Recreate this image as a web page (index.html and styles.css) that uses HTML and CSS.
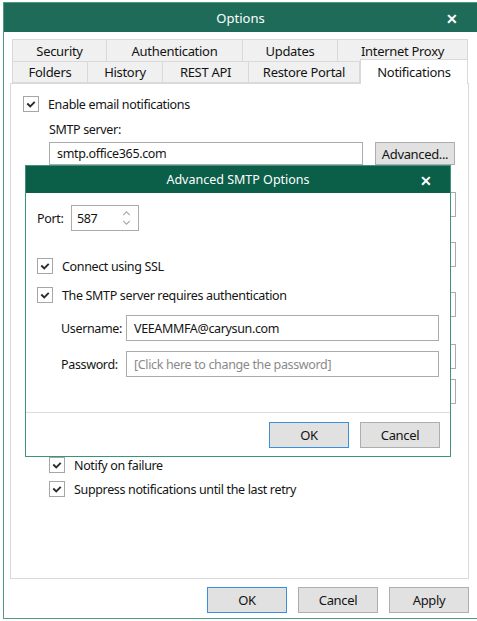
FILE: index.html
```html
<!DOCTYPE html>
<html>
	<head>
		<meta charset="UTF-8">
		<title>Options</title>
		<link rel="stylesheet" href="styles.css">
	</head>
	<body>
		<div class="window">
			<div class="titlebar">
				<span class="title">Options</span>
				<span class="close">&#x2715;</span>
			</div>
			<div class="tabs">
				<div class="tabrow">
					<div class="tab w95">Security</div>
					<div class="tab w136">Authentication</div>
					<div class="tab w95">Updates</div>
					<div class="tab w130">Internet Proxy</div>
				</div>
				<div class="tabrow">
					<div class="tab w76">Folders</div>
					<div class="tab w75">History</div>
					<div class="tab w86">REST API</div>
					<div class="tab w111">Restore Portal</div>
					<div class="tab w108 active">Notifications</div>
				</div>
			</div>
			<div class="panel">
				<label class="opt first"><span class="chk"><svg viewBox="0 0 15 15"><polyline points="3.5,7 6.7,10.2 11.5,5.2"/></svg></span>Enable email notifications</label>
				<div class="lbl">SMTP server:</div>
				<div class="srvrow">
					<div class="field srv">smtp.office365.com</div>
					<div class="btn adv">Advanced...</div>
				</div>
				<div class="under">
					<div class="field u1"></div>
					<div class="field u2"></div>
					<div class="field u3"></div>
					<div class="field u4"></div>
					<div class="field u5"></div>
				</div>
				<label class="opt sub"><span class="chk"><svg viewBox="0 0 15 15"><polyline points="3.5,7 6.7,10.2 11.5,5.2"/></svg></span>Notify on failure</label>
				<label class="opt sub next"><span class="chk"><svg viewBox="0 0 15 15"><polyline points="3.5,7 6.7,10.2 11.5,5.2"/></svg></span>Suppress notifications until the last retry</label>
			</div>
			<div class="footer">
				<div class="btn default">OK</div>
				<div class="btn">Cancel</div>
				<div class="btn">Apply</div>
			</div>

			<div class="dialog">
				<div class="dtitle">
					<span class="title">Advanced SMTP Options</span>
					<span class="close">&#x2715;</span>
				</div>
				<div class="dbody">
					<div class="portrow">
						<span class="plbl">Port:</span>
						<div class="spin">
							<span class="val">587</span>
							<span class="arrows">
								<svg viewBox="0 0 10 6"><polyline points="1,5 5,1 9,5"/></svg>
								<svg viewBox="0 0 10 6"><polyline points="1,1 5,5 9,1"/></svg>
							</span>
						</div>
					</div>
					<label class="opt ssl"><span class="chk"><svg viewBox="0 0 15 15"><polyline points="3.5,7 6.7,10.2 11.5,5.2"/></svg></span>Connect using SSL</label>
					<label class="opt auth"><span class="chk"><svg viewBox="0 0 15 15"><polyline points="3.5,7 6.7,10.2 11.5,5.2"/></svg></span>The SMTP server requires authentication</label>
					<div class="cred">
						<span class="clbl">Username:</span>
						<div class="field cf">VEEAMMFA@carysun.com</div>
					</div>
					<div class="cred pw">
						<span class="clbl">Password:</span>
						<div class="field cf hint">[Click here to change the password]</div>
					</div>
				</div>
				<div class="dfoot">
					<div class="btn default">OK</div>
					<div class="btn">Cancel</div>
				</div>
			</div>
		</div>
	</body>
</html>
```

FILE: styles.css
```css
*{margin:0;padding:0;box-sizing:border-box;}
body{width:477px;height:621px;background:#fff;font-family:"Noto Sans","Open Sans",sans-serif;font-size:12.5px;letter-spacing:-0.35px;color:#141414;overflow:hidden;}
.window{position:relative;margin:2px 0 0 3px;width:474px;height:617px;border:1px solid #4f9c84;border-right:none;background:#fff;}
.titlebar{height:29px;background:#1f6b5a;color:#fff;display:flex;align-items:center;justify-content:center;position:relative;}
.titlebar .title{font-size:13px;letter-spacing:0;}
.close{position:absolute;right:19px;top:50%;transform:translateY(-50%);font-size:14px;font-weight:bold;color:#fff;}
.tabs{margin:7px 0 0 8px;}
.tabrow{display:flex;height:22px;}
.tab{height:22px;background:#f0f0f0;border:1px solid #d9d9d9;border-left:none;display:flex;align-items:center;justify-content:center;font-size:13px;letter-spacing:-0.3px;}
.tabrow .tab:first-child{border-left:1px solid #d9d9d9;}
.tabrow:first-child .tab{border-bottom:none;}
.tab.active{background:#fff;height:25px;margin-top:-2px;border-bottom:none;position:relative;z-index:1;border-left:1px solid #d9d9d9;}
.w95{width:95px;}.w136{width:136px;}.w130{width:130px;}.w76{width:76px;}.w75{width:75px;}.w86{width:86px;}.w111{width:111px;}.w108{width:108px;}
.panel{margin-left:6px;width:459px;height:496px;border:1px solid #dadada;}
.opt{display:flex;align-items:center;height:16px;}
.chk{width:16px;height:16px;border:1px solid #a6a6a6;background:#fff;margin-right:9px;display:flex;align-items:center;justify-content:center;}
.chk svg{width:14px;height:14px;fill:none;stroke:#2b2b2b;stroke-width:2;}
.opt.first{margin:12px 0 0 12px;}
.lbl{margin:10px 0 0 38px;height:16px;line-height:16px;}
.srvrow{display:flex;margin:4px 0 0 38px;gap:12px;}
.field{height:23px;border:1px solid #ababab;background:#fff;padding-left:7px;display:flex;align-items:center;}
.srv{width:314px;}
.btn{width:80px;height:26px;background:#e1e1e1;border:1px solid #adadad;display:flex;align-items:center;justify-content:center;font-size:13px;}
.adv{height:23px;}
.under{position:relative;height:241px;margin-left:38px;}
.under .field{position:absolute;left:0;width:407px;height:25px;}
.u1{top:27px;}.u2{top:77px;}.u3{top:127px;}.u4{top:179px;}.u5{top:214px;}
.opt.sub{margin:51px 0 0 38px;}
.opt.sub.next{margin-top:8px;}
.footer{display:flex;justify-content:flex-end;gap:11px;margin:8px 8px 0 0;}
.btn.default{border-color:#3c8fd8;}
.dialog{position:absolute;left:21px;top:162px;width:426px;height:292px;border:1px solid #3f9279;background:#fff;display:flex;flex-direction:column;z-index:2;}
.dtitle{height:27px;background:#0b5e48;color:#fff;display:flex;align-items:center;justify-content:center;position:relative;}
.dtitle .title{font-size:12.5px;letter-spacing:0;}
.dtitle .close{right:18px;}
.dbody{flex:1;padding:12px 0 0 11px;}
.portrow{display:flex;align-items:center;height:26px;}
.plbl{width:34px;}
.spin{width:68px;height:26px;border:1px solid #ababab;display:flex;align-items:center;padding-left:5px;}
.spin .val{flex:1;}
.arrows{width:24px;height:100%;display:flex;flex-direction:column;align-items:center;justify-content:center;gap:4px;}
.arrows svg{width:9px;height:5px;fill:none;stroke:#a8a8a8;stroke-width:1.3;}
.opt.ssl{margin-top:27px;}
.opt.auth{margin-top:13px;}
.cred{display:flex;align-items:center;margin:12px 0 0 24px;}
.cred.pw{margin-top:10px;}
.clbl{width:65px;}
.cf{width:313px;height:26px;}
.hint{color:#8a8a8a;}
.dfoot{height:44px;border-top:1px solid #dcdcdc;display:flex;justify-content:flex-end;gap:11px;padding:9px 10px 0 0;}
```
